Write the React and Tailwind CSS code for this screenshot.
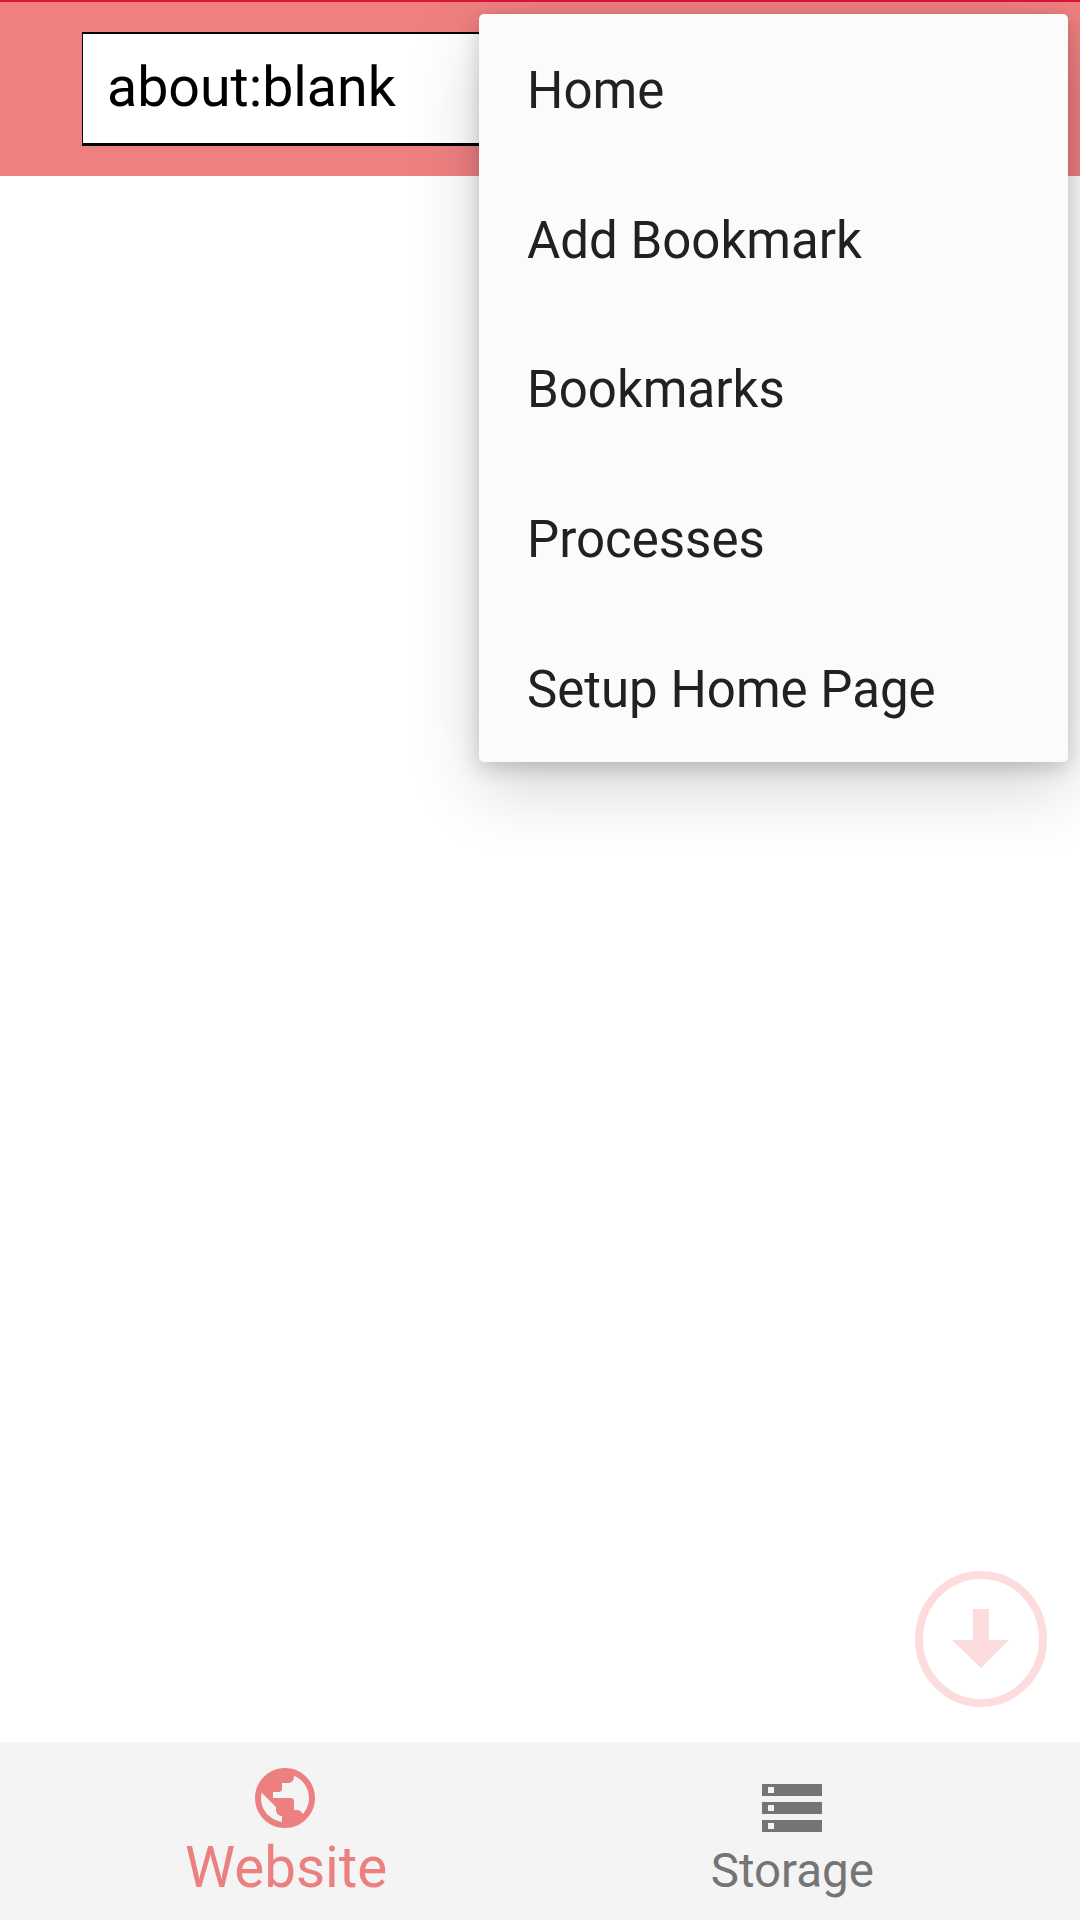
import { MdPublic, MdStorage } from "react-icons/md";

const menuItems = ["Home", "Add Bookmark", "Bookmarks", "Processes", "Setup Home Page"];

export default function App() {
    return (
        <div className="relative flex flex-col w-[1080px] h-[1920px] overflow-hidden bg-white font-['Roboto',sans-serif]">
            {/* toolbar */}
            <header className="h-[176px] shrink-0 bg-[#f08080] border-t-2 border-[#dc143c] pl-[82px] pt-[30px] pr-[300px]">
                <div className="h-[114px] flex items-center bg-white border border-t-2 border-b-[3px] border-black pl-[24px] pb-[1px] text-[55.5px] leading-none text-black">
                    about:blank
                </div>
            </header>

            {/* overflow menu */}
            <div className="absolute left-[479px] top-[14px] w-[589px] rounded-[5px] bg-[#fbfbfb] shadow-[0_26px_70px_rgba(0,0,0,0.17),0_6px_20px_rgba(0,0,0,0.18)]">
                {menuItems.map((item) => (
                    <div key={item} className="h-[149.6px] flex items-center pl-[48px] pt-[4px] text-[51px] leading-none text-[#212121]">
                        {item}
                    </div>
                ))}
            </div>

            <main className="flex-1 relative">
                {/* download button */}
                <svg className="absolute left-[915px] top-[1395px] w-[132px] h-[136px]" viewBox="0 0 132 136">
                    <ellipse cx="66" cy="68" rx="62" ry="64" fill="none" stroke="#fcdcdc" strokeWidth="8" />
                    <path d="M58 38h16v31h20L66 97 37 69h21z" fill="#fcdcdc" />
                </svg>
            </main>

            {/* bottom nav */}
            <nav className="h-[178px] shrink-0 bg-[#f4f4f4] flex justify-between pl-[185px] pr-[206px]">
                <div className="flex flex-col items-center pt-[20px] text-[#ec8080]">
                    <MdPublic size={72} className="-translate-x-px" />
                    <span className="text-[56.5px] leading-none mt-[6px]">Website</span>
                </div>
                <div className="flex flex-col items-center pt-[30px] text-[#757575]">
                    <MdStorage size={72} />
                    <span className="text-[47.5px] leading-none mt-[4px]">Storage</span>
                </div>
            </nav>
        </div>
    );
}
